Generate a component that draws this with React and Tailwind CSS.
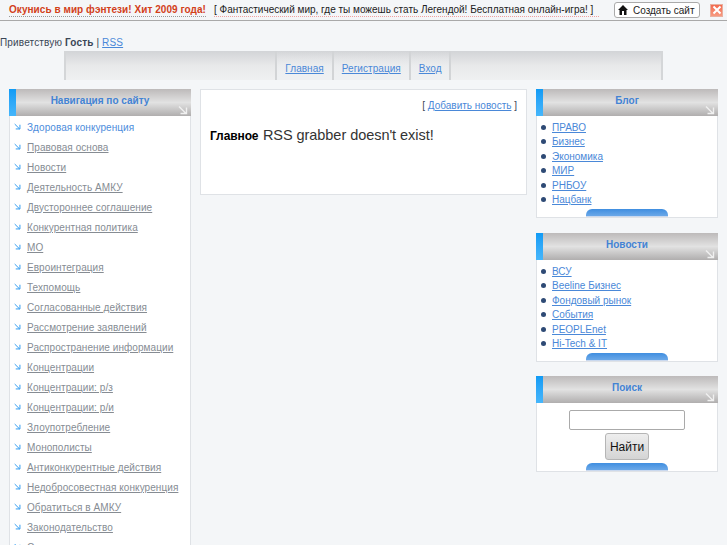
const font = { fontFamily: '"Liberation Sans", Arial, sans-serif' };

const menu = ["Правовая основа","Новости","Деятельность АМКУ","Двустороннее соглашение","Конкурентная политика","МО","Евроинтеграция","Техпомощь","Согласованные действия","Рассмотрение заявлений","Распространение информации","Концентрации","Концентрации: р/з","Концентрации: р/и","Злоупотребление","Монополисты","Антиконкурентные действия","Недобросовестная конкуренция","Обратиться в АМКУ","Законодательство","Сотрудничество"];

function Arrow({ className, color }) {
  return (
    <svg viewBox="0 0 10 10" className={className} fill="none" stroke={color} strokeWidth="1.4">
      <path d="M1 1.5 L8 8.5 M8.5 2.5 V8.5 H2.5" />
    </svg>
  );
}

function Header({ title }) {
  return (
    <div className="relative flex h-[27px] bg-gradient-to-b from-[#bdbaba] via-[#e2e2e2] to-[#b0aeae]">
      <div className="w-[7px] bg-gradient-to-b from-[#0f9bf5] to-[#45b6fb]" />
      <div className="flex-1 flex items-center justify-center text-[10px] font-bold text-[#4383d4] pb-[4px] pr-[7px]">{title}</div>
      <Arrow className="absolute right-[3px] bottom-[1px] w-[10px] h-[10px]" color="#f0f0f0" />
    </div>
  );
}

function Pill() {
  return <div className="mx-auto w-[82px] h-[8px] rounded-t-[6px] bg-gradient-to-b from-[#3f8ee0] to-[#6aa8e8] border-b border-[#c9d8ee]" />;
}

function Block({ title, className, children }) {
  return (
    <div className={className}>
      <Header title={title} />
      <div className="bg-white border border-t-0 border-[#dfe2e6]">{children}</div>
    </div>
  );
}

function Links({ items }) {
  return (
    <ul className="pl-[15px] pt-[4px] h-[93px]">
      {items.map((t) => (
        <li key={t} className="flex items-center h-[14.5px] text-[10px] text-[#4a88d8]">
          <span className="w-[5px] h-[5px] rounded-full bg-[#2e4a75] mr-[6px] ml-[-11px]" />
          <span className="underline">{t}</span>
        </li>
      ))}
    </ul>
  );
}

export default function App() {
  return (
    <div style={font} className="w-[727px] h-[545px] overflow-hidden bg-[#f4f6f8] text-[#3a4656]">
      <div className="h-[21px] flex items-center whitespace-nowrap border-b border-[#a9a9a9] bg-[#f4f6f8] pl-[9px] pr-[4px] text-[10px] text-[#222]">
        <span className="font-bold tracking-[0.05px] text-[#d2401a] border-b border-dotted border-[#999] leading-[12px] w-[197px]">Окунись в мир фэнтези! Хит 2009 года!</span>
        <span className="ml-[8px] w-[385px] leading-[12px] border-b border-dotted border-[#f0a0a0]">[ Фантастический мир, где ты можешь стать Легендой! Бесплатная онлайн-игра! ]</span>
        <span className="ml-[15px] flex items-center h-[16px] w-[86px] pl-[2px] gap-[4px] bg-white border border-[#aaa] rounded-[3px]">
          <svg viewBox="0 0 12 12" className="w-[12px] h-[12px]"><path d="M6 1 L1 6 H2.5 V11 H9.5 V6 H11 Z" fill="#111" /><rect x="5" y="7" width="2" height="4" fill="#fff" /></svg>
          Создать сайт
        </span>
        <span className="ml-auto flex items-center justify-center w-[13px] h-[13px] bg-gradient-to-b from-[#f26a4e] to-[#f79a80] border border-[#e8b0a0]">
          <svg viewBox="0 0 10 10" className="w-[10px] h-[10px]"><path d="M1.5 1.5 L8.5 8.5 M8.5 1.5 L1.5 8.5" stroke="#fff" strokeWidth="2" /></svg>
        </span>
      </div>

      <div className="mt-[14px] h-[15px] leading-[15px] text-[10px] tracking-[0.15px]">
        Приветствую <b>Гость</b> | <span className="underline text-[#4a88d8]">RSS</span>
      </div>

      <div className="mt-[1px] ml-[64px] w-[599px] h-[29px] flex justify-center border-x-2 border-[#d4d6d8] bg-gradient-to-b from-[#d2d4d7] via-[#e8e9ea] to-[#eff0f1]">
        <div className="flex pr-[1px]">
          {["Главная","Регистрация","Вход"].map((t) => (
            <div key={t} className="flex items-end pb-[4px] px-[8px] text-[10px] tracking-[0.05px] text-[#4a88d8] underline border-l-2 border-[#d2d4d6] last:border-r-2 last:pr-[7px] bg-gradient-to-b from-transparent to-[#eef0f2]">{t}</div>
          ))}
        </div>
      </div>

      <div className="mt-[9px] flex items-start pl-[9px] gap-[9px]">
        <div className="w-[182px] shrink-0">
          <Header title="Навигация по сайту" />
          <div className="bg-white border border-t-0 border-[#dfe2e6] pt-[1px] pl-[3px]">
            <div className="flex items-center h-[20px] text-[10px] tracking-[0.07px] text-[#4d8ddc]">
              <Arrow className="w-[7px] h-[7px] mr-[6px] ml-[1px] mb-[2px]" color="#2f9bf0" />Здоровая конкуренция
            </div>
            {menu.map((t) => (
              <div key={t} className="flex items-center h-[20px] text-[10px] tracking-[0.07px] text-[#868c93]">
                <Arrow className="w-[7px] h-[7px] mr-[6px] ml-[1px] mb-[2px]" color="#2f9bf0" /><span className="underline">{t}</span>
              </div>
            ))}
          </div>
        </div>

        <div className="w-[327px] h-[106px] shrink-0 bg-white border border-[#dfe2e6] px-[9px] pt-[9px]">
          <div className="text-right text-[10px] leading-[14px]">[ <span className="underline text-[#4a88d8]">Добавить новость</span> ]</div>
          <div className="mt-[12px] text-black leading-[20px] whitespace-nowrap">
            <b className="text-[12px] tracking-[-0.1px]">Главное</b> <span className="text-[14.5px] tracking-[-0.05px] text-[#333]">RSS grabber doesn't exist!</span>
          </div>
        </div>

        <div className="w-[182px] shrink-0 flex flex-col">
          <Block title="Блог">
            <Links items={["ПРАВО","Бизнес","Экономика","МИР","РНБОУ","Нацбанк"]} />
            <Pill />
          </Block>
          <Block title="Новости" className="mt-[15px]">
            <Links items={["ВСУ","Beeline Бизнес","Фондовый рынок","События","PEOPLEnet","Hi-Tech & IT"]} />
            <Pill />
          </Block>
          <Block title="Поиск" className="mt-[14px]">
            <div className="flex flex-col items-center pt-[7px]">
              <input className="w-[116px] h-[20px] bg-white border border-[#aaa] rounded-[2px]" />
              <button className="mt-[3px] w-[44px] h-[27px] bg-gradient-to-b from-[#eee] to-[#d4d4d4] border border-[#b5b5b5] rounded-[3px] text-[12px] text-[#111]">Найти</button>
            </div>
            <div className="mt-[3px]"><Pill /></div>
          </Block>
        </div>
      </div>
    </div>
  );
}
